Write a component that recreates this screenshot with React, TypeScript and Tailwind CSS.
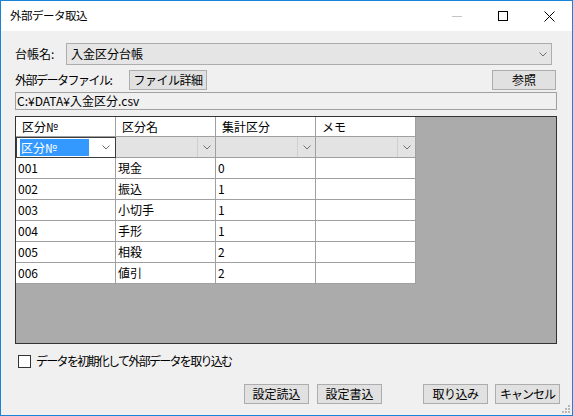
import type { ReactNode } from 'react';

const rows = [
  ['001', '現金', '0', ''],
  ['002', '振込', '1', ''],
  ['003', '小切手', '1', ''],
  ['004', '手形', '1', ''],
  ['005', '相殺', '2', ''],
  ['006', '値引', '2', ''],
];

const headers = ['区分№', '区分名', '集計区分', 'メモ'];

function Chevron() {
  return (
    <svg width="8" height="5" viewBox="0 0 8 5" className="text-[#707070]">
      <path d="M0.5 0.5 L4 4 L7.5 0.5" fill="none" stroke="currentColor" strokeWidth="1" />
    </svg>
  );
}

function Button({ children, className = '' }: { children: ReactNode; className?: string }) {
  return (
    <button className={`flex h-[20px] items-center justify-center border border-[#adadad] bg-[#e1e1e1] leading-none ${className}`}>
      {children}
    </button>
  );
}

export default function App() {
  return (
    <div className="relative flex h-[416px] w-[573px] flex-col overflow-hidden border border-[#1883d7] bg-[#f0f0f0] font-['Noto_Sans_CJK_JP','Noto_Sans',sans-serif] text-[12px] text-black">
      {/* title bar */}
      <div className="flex h-[30px] shrink-0 items-center bg-white">
        <span className="flex-1 pl-[9px] text-[11.5px] tracking-[-0.5px]">外部データ取込</span>
        <div className="flex h-full w-[46px] items-center justify-center">
          <div className="h-px w-[10px] bg-[#c4c4c4]" />
        </div>
        <div className="flex h-full w-[46px] items-center justify-center">
          <div className="h-[10px] w-[10px] border border-black" />
        </div>
        <div className="flex h-full w-[46px] items-center justify-center">
          <svg width="11" height="11" viewBox="0 0 11 11">
            <path d="M0.5 0.5 L10.5 10.5 M10.5 0.5 L0.5 10.5" stroke="black" strokeWidth="1" />
          </svg>
        </div>
      </div>

      <div className="flex flex-1 flex-col pl-[14px] pr-[15px] pt-[12px]">
        {/* ledger */}
        <div className="flex h-[22px] items-center">
          <span className="w-[51px]">台帳名:</span>
          <div className="mr-[5px] flex h-full flex-1 items-center border border-[#adadad] bg-[#e5e5e5] pl-[4px] pr-[4px]">
            <span className="flex-1">入金区分台帳</span>
            <Chevron />
          </div>
        </div>

        {/* file row */}
        <div className="mt-[5px] flex h-[19px] items-center">
          <span className="w-[114px] tracking-[-1.5px]">外部データファイル:</span>
          <Button className="h-[19px] w-[78px] tracking-[-0.5px]">ファイル詳細</Button>
          <div className="flex-1" />
          <Button className="mr-px h-[19px] w-[64px]">参照</Button>
        </div>

        <div className="mt-[3px] flex h-[18px] items-center border border-[#a0a0a0] pl-[1px] leading-none">
          C:¥DATA¥入金区分.csv
        </div>

        {/* grid */}
        <div className="mt-[6px] h-[228px] border border-[#333333] bg-[#ababab]">
          <div className="grid w-[400px] grid-cols-[100px_100px_100px_100px] bg-white">
            {headers.map((h) => (
              <div key={h} className="flex h-[20px] items-center border-b border-r border-[#a0a0a0] pl-[6px]">
                {h}
              </div>
            ))}
            <div className="flex h-[21px] items-center border border-[#3c3c3c] pl-[3px] pr-[5px]">
              <span className="flex-1">
                <span className="bg-[#3399ff] px-px pr-[32px] text-white">区分№</span>
              </span>
              <Chevron />
            </div>
            {[1, 2, 3].map((i) => (
              <div key={i} className="flex h-[21px] border-b border-r border-[#a0a0a0] bg-[#e3e3e3]">
                <div className="flex-1" />
                <div className="flex w-[18px] items-center justify-center border-l border-[#cfcfcf]">
                  <Chevron />
                </div>
              </div>
            ))}
            {rows.map((r) =>
              r.map((c, j) => (
                <div key={r[0] + j} className="flex h-[21px] items-center border-b border-r border-[#a0a0a0] pl-[2px]">
                  {c}
                </div>
              )),
            )}
          </div>
        </div>

        {/* checkbox */}
        <div className="mt-[8px] flex items-center">
          <div className="ml-[3px] h-[13px] w-[13px] border border-[#333333] bg-white" />
          <span className="ml-[5px] tracking-[-1.7px]">データを初期化して外部データを取り込む</span>
        </div>

        {/* buttons */}
        <div className="-mr-[3px] mt-[14px] flex justify-end">
          <Button className="w-[65px]">設定読込</Button>
          <Button className="ml-[8px] w-[65px]">設定書込</Button>
          <Button className="ml-[41px] w-[65px] tracking-[-0.5px]">取り込み</Button>
          <Button className="ml-[7px] w-[65px] tracking-[-1px]">キャンセル</Button>
        </div>
      </div>

      {/* size grip */}
      <svg width="10" height="10" viewBox="0 0 10 10" className="absolute bottom-[2px] right-[2px]">
        {[
          [8, 2],
          [8, 5],
          [5, 5],
          [8, 8],
          [5, 8],
          [2, 8],
        ].map(([x, y]) => (
          <rect key={`${x}-${y}`} x={x} y={y} width="2" height="2" fill="#b8b8b8" />
        ))}
      </svg>
    </div>
  );
}
